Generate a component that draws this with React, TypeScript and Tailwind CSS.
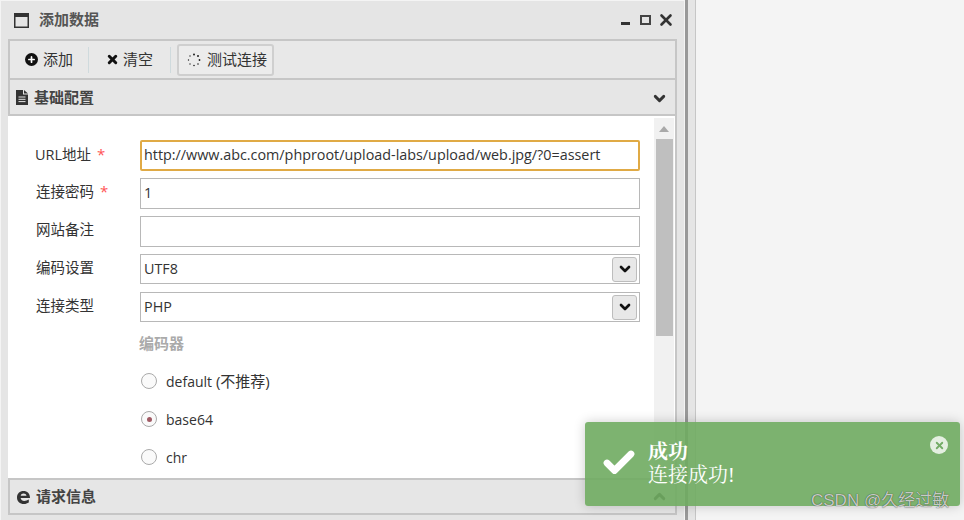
import { Check, ChevronDown, ChevronUp, Plus, X } from "lucide-react";

const uiFont = "font-['Open_Sans','Noto_Sans_CJK_SC',sans-serif]";

function Field({ label, required, value, focused }: { label: string; required?: boolean; value?: string; focused?: boolean }) {
  return (
    <div className="flex items-center h-[38px]">
      <label
        className={`text-[14.500px] text-[#333] flex items-center gap-[6px] shrink-0 ${
          focused ? "w-[105px] -ml-[1px] mb-[1px]" : "w-[104px] mb-[3px]"
        }`}
      >
        {label}
        {required && <span className="text-[#f55] text-[15px] leading-none">*</span>}
      </label>
      <div
        className={`h-[31px] w-[500px] flex items-center text-[14.350px] text-[#333] bg-white ${
          focused ? "border-2 border-[#e0aa45] rounded-[2px] px-[2px]" : "border border-[#b8b8b8] px-[3px]"
        }`}
      >
        {value}
      </div>
    </div>
  );
}

function SelectField({ label, value }: { label: string; value: string }) {
  return (
    <div className="flex items-center h-[38px]">
      <label className="w-[104px] mb-[3px] text-[14.500px] text-[#333] shrink-0">{label}</label>
      <div className="h-[30px] w-[500px] flex items-center justify-between pl-[3px] pr-[2px] text-[14.350px] text-[#333] bg-white border border-[#b8b8b8]">
        {value}
        <span className="w-[25px] h-[25px] flex items-center justify-center rounded-[3px] border border-[#bdbdbd] bg-[#e8e8e8]">
          <ChevronDown size={16} strokeWidth={4} className="text-[#111]" />
        </span>
      </div>
    </div>
  );
}

function Radio({ label, hint, checked }: { label: string; hint?: string; checked?: boolean }) {
  return (
    <div className="flex items-center h-[38px] gap-[9px] text-[14px] text-[#333]">
      <span className="w-[16px] h-[16px] rounded-full border border-[#aaa] bg-[#fafafa] flex items-center justify-center">
        {checked && <span className="w-[5px] h-[5px] rounded-full bg-[#a05a64]" />}
      </span>
      <span>
        {label}
        {hint && <span className="text-[15px]"> {hint}</span>}
      </span>
    </div>
  );
}

function EdgeIcon() {
  return (
    <svg width="15" height="14" viewBox="0 0 15 14" className="text-[#333]">
      <path
        d="M1 7.500C1 3.500 3.800 1 7.500 1S14 3.600 14 8H4.600C5 10 6.500 10.900 8.200 10.900c1.700 0 3.200-.5 4.600-1.400v3C11.400 13.400 9.800 14 8 14 3.800 14 1 11.500 1 7.500ZM4.700 5.700h5.800C10.200 4.300 9.100 3.500 7.600 3.500S5 4.300 4.700 5.700Z"
        fill="currentColor"
      />
    </svg>
  );
}

function DocIcon() {
  return (
    <svg width="12" height="15" viewBox="0 0 12 15">
      <path d="M0 0h7v4.500h5V15H0Z" fill="#333" />
      <path d="M8 0l4 3.500H8Z" fill="#333" />
      <path d="M2.500 7h7M2.500 9.300h7M2.500 11.600h7" stroke="#e6e6e6" strokeWidth="1" />
    </svg>
  );
}

export default function App() {
  return (
    <div className={`relative flex w-[964px] h-[520px] overflow-hidden bg-[#f4f4f4] ${uiFont}`}>
      <div className="w-[684px] h-full pl-[1px] pt-[1px] bg-[#f4f4f4] shrink-0">
        <div className="h-full bg-[#e5e5e5] pl-[7px] pr-[7px] flex flex-col">
          <div className="h-[38px] flex items-center justify-between shrink-0 pr-[2px]">
            <div className="flex items-center gap-[10px] pl-[6px]">
              <svg width="15" height="15" viewBox="0 0 15 15">
                <rect x="0.750" y="0.750" width="13.500" height="13.500" fill="none" stroke="#333" strokeWidth="1.500" />
                <rect x="0" y="0" width="15" height="4" fill="#333" />
              </svg>
              <span className="text-[15px] font-bold text-[#555] mb-[2px]">添加数据</span>
            </div>
            <div className="flex items-center text-[#333]">
              <span className="w-[9px] h-[3px] bg-[#333] mt-[7px] mr-[10px]" />
              <span className="w-[11px] h-[10px] border-2 border-[#444] mr-[6px]" />
              <X size={18} strokeWidth={3.500} />
            </div>
          </div>

          <div className="h-[41px] shrink-0 border-2 border-[#c6c6c6] bg-[#e8e8e8] flex items-center pl-[15px] text-[15px] text-[#333]">
            <span className="flex items-center gap-[5px] mb-[1px]">
              <span className="w-[13px] h-[13px] rounded-full bg-[#111] flex items-center justify-center">
                <Plus size={9} strokeWidth={4.500} className="text-white" />
              </span>
              添加
            </span>
            <span className="w-px h-[26px] bg-[#cfdadd] ml-[15px] mr-[17px]" />
            <span className="flex items-center gap-[4px] mb-[1px]">
              <X size={13} strokeWidth={5.500} className="text-[#111]" />
              清空
            </span>
            <span className="w-px h-[26px] bg-[#cfdadd] ml-[17px] mr-[6px]" />
            <span className="flex items-center gap-[6px] h-[32px] pl-[8px] pr-[5px] rounded-[3px] border-2 border-[#cfcfcf] bg-[#ececec]">
              <svg width="14" height="14" viewBox="0 0 14 14" fill="#222">
                <circle cx="7" cy="1.500" r="1" />
                <circle cx="11" cy="3" r="1" />
                <circle cx="12.500" cy="7" r="0.900" />
                <circle cx="11" cy="11" r="0.800" />
                <circle cx="7" cy="12.500" r="0.800" />
                <circle cx="3" cy="11" r="0.700" />
                <circle cx="1.500" cy="7" r="0.700" />
                <circle cx="3" cy="3" r="0.700" />
              </svg>
              测试连接
            </span>
          </div>

          <div className="h-[36px] shrink-0 border-x-2 border-b-2 border-[#c6c6c6] bg-[#e6e6e6] flex items-center justify-between pl-[6px] pr-[7px]">
            <span className="flex items-center gap-[6px] text-[15px] font-bold text-[#444]">
              <DocIcon />
              基础配置
            </span>
            <ChevronDown size={17} strokeWidth={4} className="text-[#333] mt-[3px]" />
          </div>

          <div className="h-[362px] shrink-0 bg-white flex border-r-2 border-[#c6c6c6] overflow-hidden">
            <div className="w-[646px] shrink-0 pl-[28px] pt-[20px]">
              <Field label="URL地址" required value="http://www.abc.com/phproot/upload-labs/upload/web.jpg/?0=assert" focused />
              <Field label="连接密码" required value="1" />
              <Field label="网站备注" />
              <SelectField label="编码设置" value="UTF8" />
              <SelectField label="连接类型" value="PHP" />
              <div className="pl-[105px] -mt-[2px]">
                <div className="h-[38px] -ml-[2px] flex items-center text-[15px] font-bold text-[#aaa]">编码器</div>
                <Radio label="default" hint="(不推荐)" />
                <Radio label="base64" checked />
                <Radio label="chr" />
              </div>
            </div>
            <div className="w-[20px] mt-[2px] bg-[#f1f1f1] flex flex-col items-center">
              <span className="h-[21px] flex items-center justify-center">
                <span className="border-x-[5px] border-x-transparent border-b-[6px] border-b-[#a9a9a9]" />
              </span>
              <span className="w-[17px] h-[197px] bg-[#bfbfbf]" />
            </div>
          </div>

          <div className="h-[37px] shrink-0 border-2 border-[#c6c6c6] bg-[#e6e6e6] flex items-center justify-between pl-[6px] pr-[7px]">
            <span className="flex items-center gap-[5px] text-[15px] font-bold text-[#444]">
              <EdgeIcon />
              请求信息
            </span>
            <ChevronUp size={17} strokeWidth={4} className="text-[#333]" />
          </div>
        </div>
      </div>
      <div className="w-[12px] h-full shrink-0 flex">
        <span className="w-[1px] bg-[#f4f4f4]" />
        <span className="w-[3px] bg-[#999]" />
        <span className="w-[7px] bg-[#e5e5e5]" />
        <span className="w-[1px] bg-[#c6c6c6]" />
      </div>

      <div className="absolute left-[585px] top-[422px] w-[375px] h-[84px] rounded-[3px] bg-[#6fab61]/90 shadow-[0_0_12px_rgba(0,0,0,0.2)] text-white font-['Liberation_Serif','Noto_Serif_CJK_SC','Noto_Sans_CJK_SC',serif]">
        <Check size={36} strokeWidth={4.500} className="absolute left-[16px] top-[23px]" />
        <div className="absolute left-[63px] top-[19px] text-[20px] leading-[23px]">
          <div className="font-bold">成功</div>
          <div>连接成功!</div>
        </div>
        <span className="absolute right-[12px] top-[14px] w-[18px] h-[18px] rounded-full bg-[#e4efe1] flex items-center justify-center">
          <X size={11} strokeWidth={4} className="text-[#73ac66]" />
        </span>
      </div>
      <span className="absolute left-[811px] top-[491px] text-[17px] leading-[20px] text-white/75 font-['Liberation_Sans','Noto_Sans_CJK_SC',sans-serif] [text-shadow:0_0_1px_rgba(0,0,0,0.9)]">
        CSDN @久经过敏
      </span>
    </div>
  );
}
